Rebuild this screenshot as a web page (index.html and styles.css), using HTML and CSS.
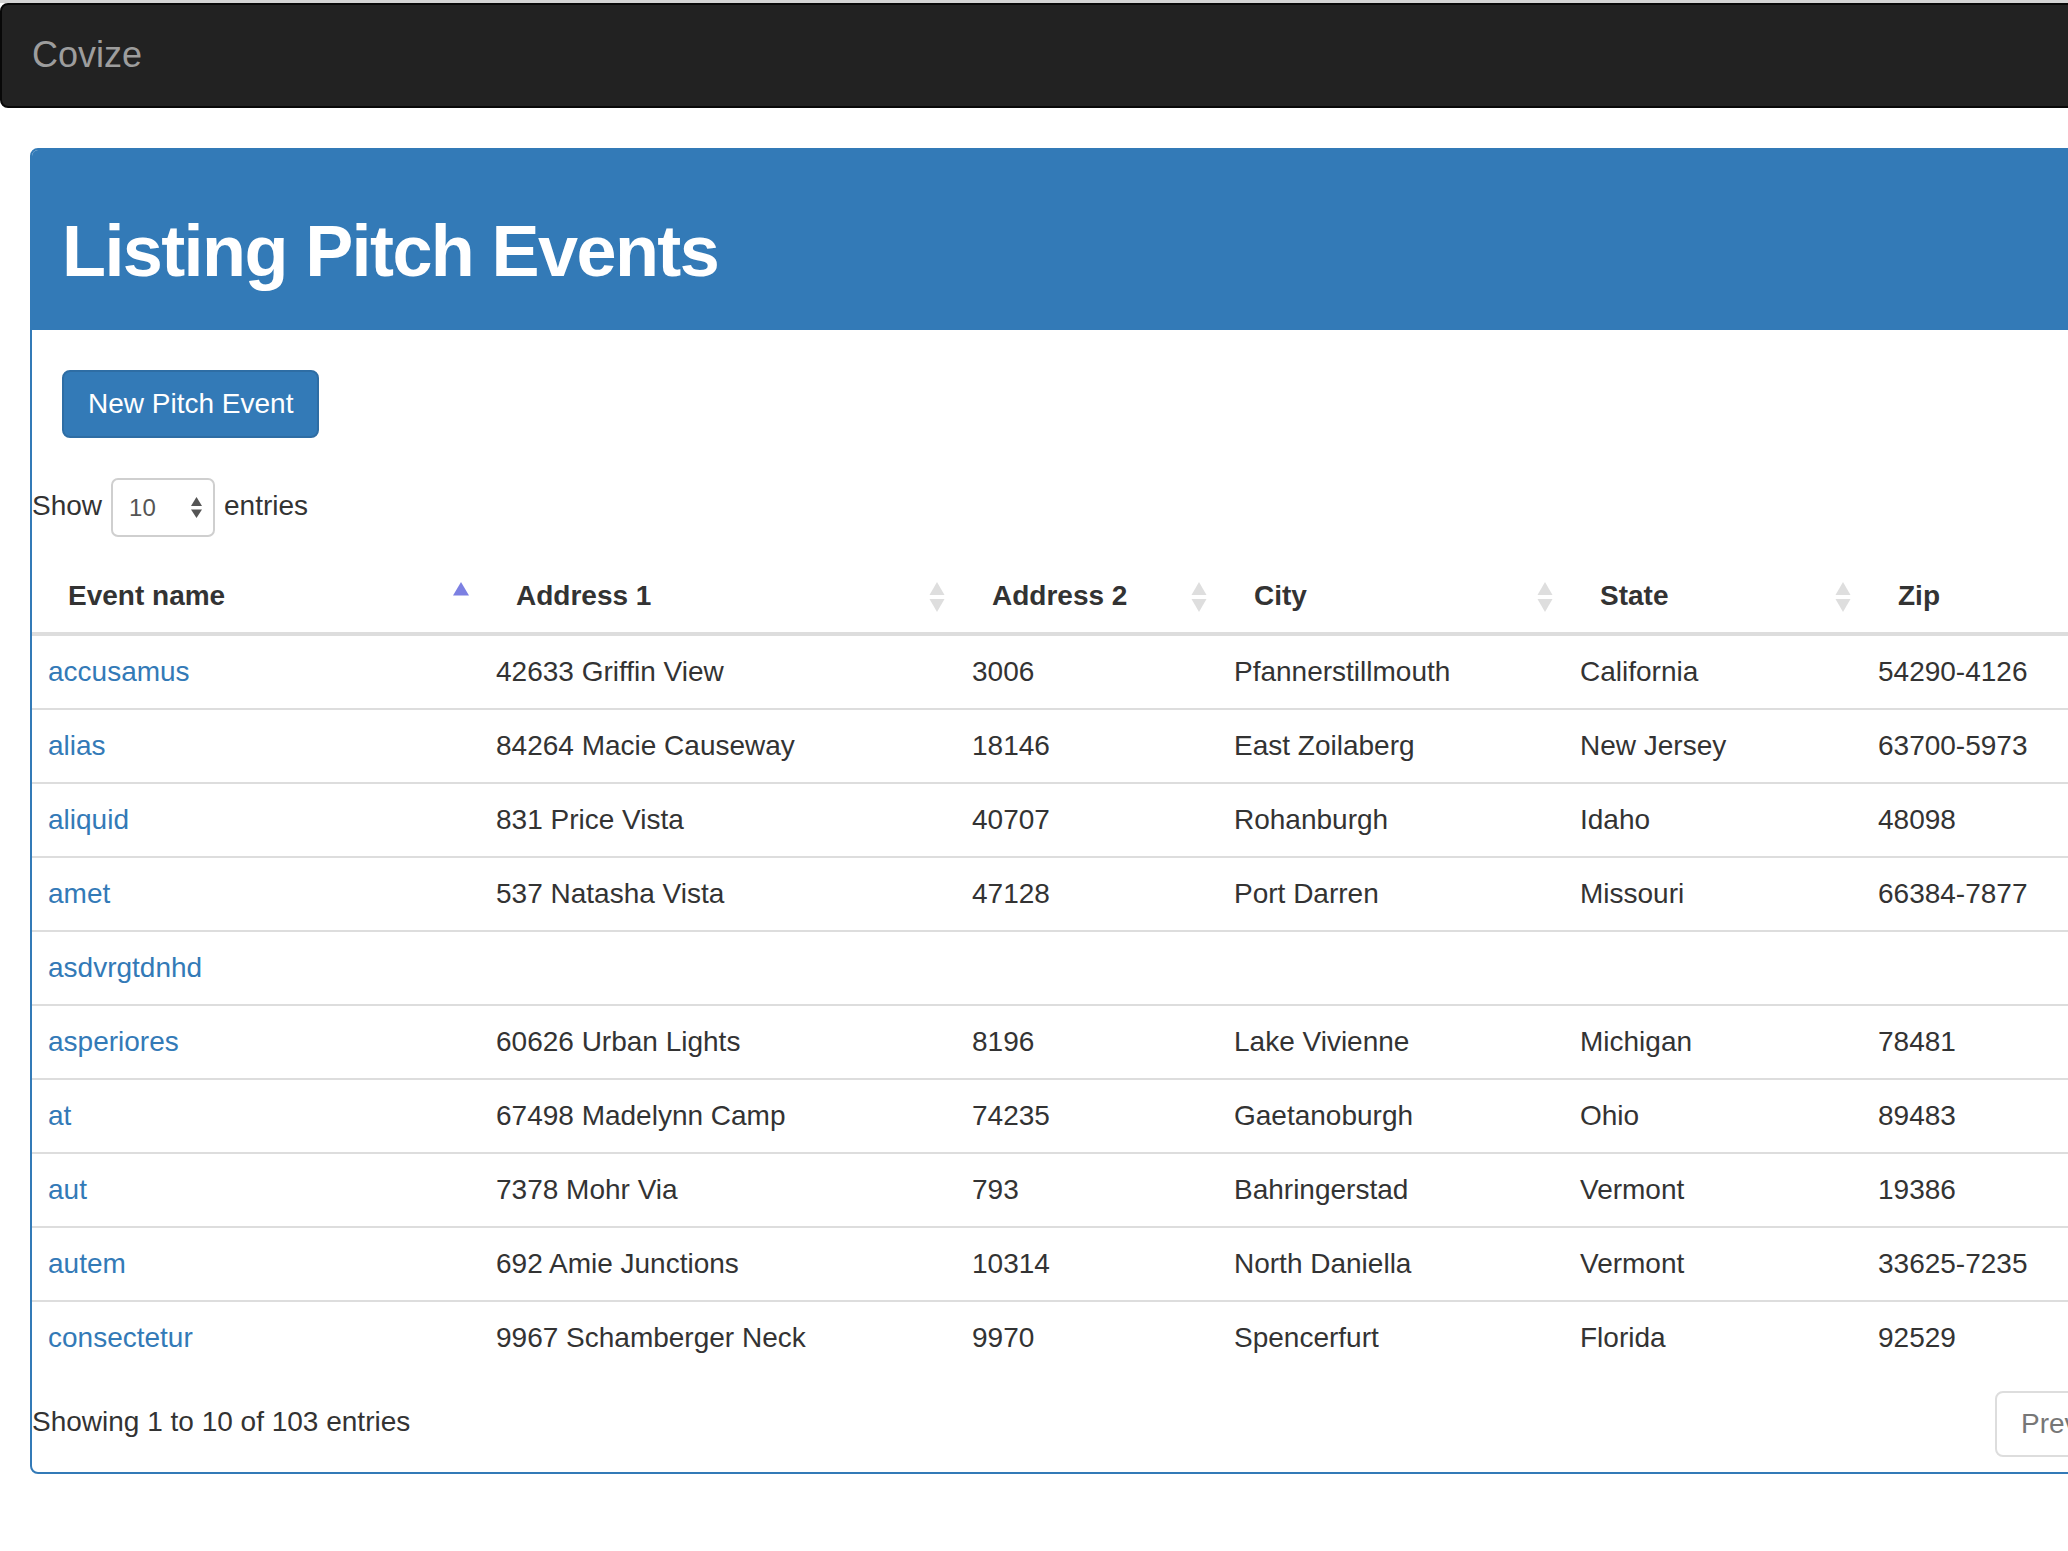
FILE: index.html
```html
<!DOCTYPE html>
<html lang="en">
<head>
<meta charset="utf-8">
<title>Covize</title>
<link rel="stylesheet" href="styles.css">
</head>
<body>
<div class="topstrip"></div>
<nav class="navbar">
  <a class="brand" href="#">Covize</a>
</nav>
<div class="container">
  <div class="panel">
    <div class="panel-heading">
      <h1>Listing Pitch Events</h1>
    </div>
    <div class="panel-body">
      <div class="actions">
        <a class="btn" href="#">New Pitch Event</a>
      </div>
      <div class="dt-wrapper">
        <div class="dt-length">
          <span class="len-text">Show</span>
          <div class="select">
            <span class="select-val">10</span>
            <svg class="select-arrows" width="11" height="21" viewBox="0 0 11 21"><polygon points="5.5,0 11,9 0,9" fill="#555"/><polygon points="0,12.5 11,12.5 5.5,21" fill="#555"/></svg>
          </div>
          <span class="len-text">entries</span>
        </div>
        <table class="dt-table">
          <thead>
            <tr>
              <th class="c-name">Event name<svg class="sort" width="16" height="30" viewBox="0 0 16 30"><polygon points="8,0 16,13.5 0,13.5" fill="#7c80e2"/></svg></th>
              <th class="c-addr1">Address 1<svg class="sort" width="16" height="30" viewBox="0 0 16 30"><polygon points="8,0 15.5,13 0.5,13" fill="#dedede"/><polygon points="0.5,17 15.5,17 8,30" fill="#dedede"/></svg></th>
              <th class="c-addr2">Address 2<svg class="sort" width="16" height="30" viewBox="0 0 16 30"><polygon points="8,0 15.5,13 0.5,13" fill="#dedede"/><polygon points="0.5,17 15.5,17 8,30" fill="#dedede"/></svg></th>
              <th class="c-city">City<svg class="sort" width="16" height="30" viewBox="0 0 16 30"><polygon points="8,0 15.5,13 0.5,13" fill="#dedede"/><polygon points="0.5,17 15.5,17 8,30" fill="#dedede"/></svg></th>
              <th class="c-state">State<svg class="sort" width="16" height="30" viewBox="0 0 16 30"><polygon points="8,0 15.5,13 0.5,13" fill="#dedede"/><polygon points="0.5,17 15.5,17 8,30" fill="#dedede"/></svg></th>
              <th class="c-zip">Zip<svg class="sort" width="16" height="30" viewBox="0 0 16 30"><polygon points="8,0 15.5,13 0.5,13" fill="#dedede"/><polygon points="0.5,17 15.5,17 8,30" fill="#dedede"/></svg></th>
            </tr>
          </thead>
          <tbody>
            <tr><td><a href="#">accusamus</a></td><td>42633 Griffin View</td><td>3006</td><td>Pfannerstillmouth</td><td>California</td><td>54290-4126</td></tr>
            <tr><td><a href="#">alias</a></td><td>84264 Macie Causeway</td><td>18146</td><td>East Zoilaberg</td><td>New Jersey</td><td>63700-5973</td></tr>
            <tr><td><a href="#">aliquid</a></td><td>831 Price Vista</td><td>40707</td><td>Rohanburgh</td><td>Idaho</td><td>48098</td></tr>
            <tr><td><a href="#">amet</a></td><td>537 Natasha Vista</td><td>47128</td><td>Port Darren</td><td>Missouri</td><td>66384-7877</td></tr>
            <tr><td><a href="#">asdvrgtdnhd</a></td><td></td><td></td><td></td><td></td><td></td></tr>
            <tr><td><a href="#">asperiores</a></td><td>60626 Urban Lights</td><td>8196</td><td>Lake Vivienne</td><td>Michigan</td><td>78481</td></tr>
            <tr><td><a href="#">at</a></td><td>67498 Madelynn Camp</td><td>74235</td><td>Gaetanoburgh</td><td>Ohio</td><td>89483</td></tr>
            <tr><td><a href="#">aut</a></td><td>7378 Mohr Via</td><td>793</td><td>Bahringerstad</td><td>Vermont</td><td>19386</td></tr>
            <tr><td><a href="#">autem</a></td><td>692 Amie Junctions</td><td>10314</td><td>North Daniella</td><td>Vermont</td><td>33625-7235</td></tr>
            <tr><td><a href="#">consectetur</a></td><td>9967 Schamberger Neck</td><td>9970</td><td>Spencerfurt</td><td>Florida</td><td>92529</td></tr>
          </tbody>
        </table>
        <div class="dt-footer">
          <div class="dt-info">Showing 1 to 10 of 103 entries</div>
          <ul class="pagination">
            <li class="disabled"><a href="#">Previous</a></li>
            <li class="active"><a href="#">1</a></li>
            <li><a href="#">2</a></li>
            <li><a href="#">3</a></li>
            <li><a href="#">Next</a></li>
          </ul>
        </div>
      </div>
    </div>
  </div>
</div>
</body>
</html>
```

FILE: styles.css
```css
html, body {
  overflow: hidden;
}
body {
  margin: 0;
  background: #fff;
  color: #333;
  font-family: "Liberation Sans", Arial, Helvetica, sans-serif;
  font-size: 28px;
  line-height: 40px;
}
a {
  color: #337ab7;
  text-decoration: none;
}

.topstrip {
  height: 3px;
  background: #d4d4d4;
}

.navbar {
  width: 2400px;
  height: 101px;
  background: #222;
  border: 2px solid #080808;
  border-radius: 8px;
  display: flex;
}
.brand {
  padding: 30px;
  font-size: 36px;
  line-height: 40px;
  color: #9d9d9d;
}

.container {
  margin-top: 40px;
  padding: 0 30px;
}

.panel {
  width: 2340px;
  border: 2px solid #337ab7;
  border-radius: 8px;
  background: #fff;
}
.panel-heading {
  background: #337ab7;
  color: #fff;
  padding: 62px 30px 39px;
  border-radius: 6px 6px 0 0;
}
.panel-heading h1 {
  margin: 0;
  font-size: 72px;
  line-height: 79px;
  font-weight: bold;
  letter-spacing: -1.6px;
}

.panel-body {
  padding: 40px 0 13px;
}
.actions {
  padding-left: 30px;
  display: flex;
}
.btn {
  display: block;
  padding: 12px 24px;
  line-height: 40px;
  color: #fff;
  background: #337ab7;
  border: 2px solid #2e6da4;
  border-radius: 8px;
}

.dt-length {
  margin-top: 40px;
  height: 59px;
  display: flex;
  align-items: center;
}
.len-text {
  padding-bottom: 3px;
}
.select {
  box-sizing: border-box;
  width: 104px;
  height: 59px;
  margin: 0 9px;
  border: 2px solid #cfcfcf;
  border-radius: 7px;
  display: flex;
  align-items: center;
  justify-content: space-between;
  padding: 0 11px 0 16px;
  font-size: 24px;
  line-height: 28px;
  color: #555;
}
.select-arrows {
  display: block;
}

.dt-table {
  margin-top: 23px;
  margin-bottom: 12px;
  border-collapse: collapse;
  table-layout: fixed;
  width: 2180px;
}
.dt-table th {
  box-sizing: border-box;
  position: relative;
  text-align: left;
  font-weight: bold;
  padding: 16px 36px;
  line-height: 40px;
  border-bottom: 4px solid #ddd;
  white-space: nowrap;
}
.dt-table th .sort {
  position: absolute;
  right: 11px;
  top: 22px;
}
.dt-table td {
  padding: 16px;
  line-height: 40px;
  border-top: 2px solid #ddd;
  white-space: nowrap;
}
.c-name { width: 448px; }
.c-addr1 { width: 476px; }
.c-addr2 { width: 262px; }
.c-city { width: 346px; }
.c-state { width: 298px; }
.c-zip { width: 350px; }

.dt-footer {
  display: flex;
  align-items: flex-start;
}
.dt-info {
  flex: 0 0 1963px;
  padding-top: 16px;
  line-height: 40px;
}
.pagination {
  display: flex;
  list-style: none;
  margin: 5px 0 2px;
  padding: 0;
}
.pagination li a {
  display: block;
  padding: 11px 24px;
  line-height: 40px;
  border: 2px solid #ddd;
  margin-left: -2px;
  color: #337ab7;
}
.pagination li:first-child a {
  margin-left: 0;
  border-radius: 8px 0 0 8px;
}
.pagination li.disabled a {
  color: #777;
}
.pagination li.active a {
  background: #337ab7;
  border-color: #337ab7;
  color: #fff;
}
```
